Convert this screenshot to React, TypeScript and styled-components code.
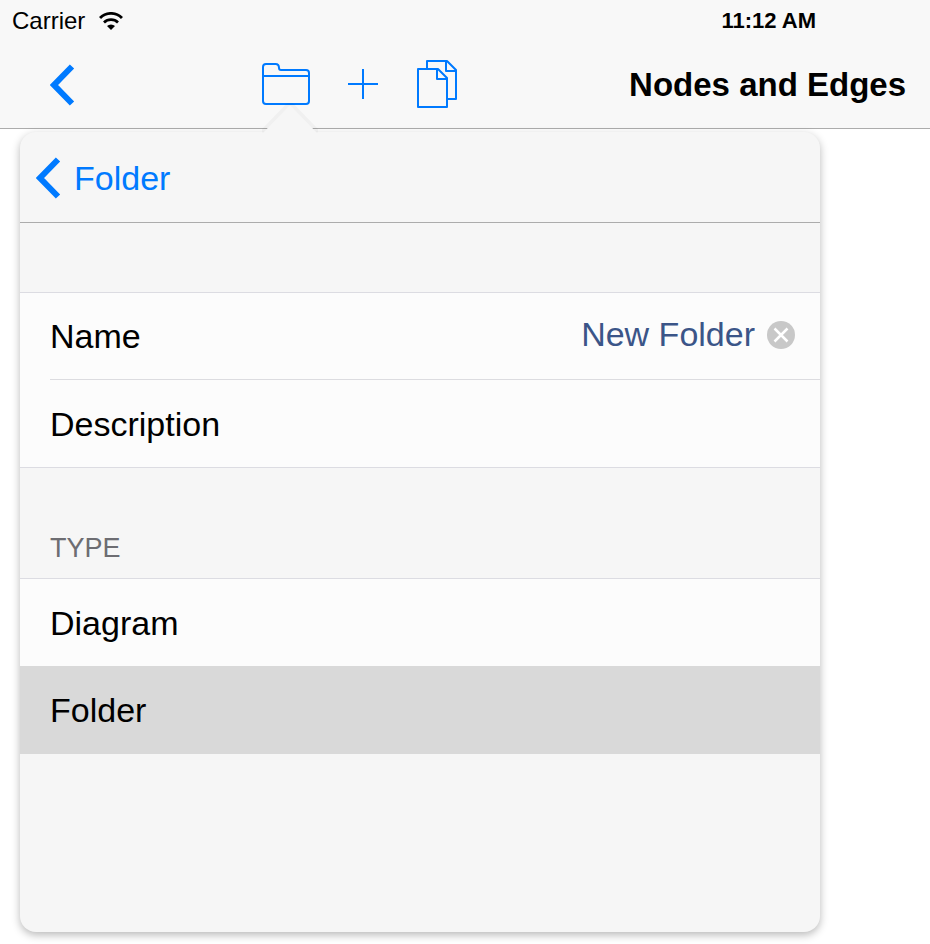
import React, { useState } from "react";
import styled, { createGlobalStyle } from "styled-components";

const GlobalStyle = createGlobalStyle`
  *, *::before, *::after { box-sizing: border-box; }
  body {
    margin: 0;
    background: #ffffff;
    color: #000000;
    font-family: "Liberation Sans", Arial, Helvetica, sans-serif;
  }
  button, input { font: inherit; }
`;

const TopBar = styled.header`
  background: #f8f8f8;
  border-bottom: 1px solid #acacac;
`;

const StatusBar = styled.div`
  display: flex;
  justify-content: space-between;
  align-items: center;
  height: 42px;
  padding: 0 114px 0 12px;
  font-size: 24px;
  line-height: 28px;
`;

const Carrier = styled.div`
  display: flex;
  align-items: center;
  gap: 14px;
`;

const Clock = styled.time`
  font-size: 22px;
  font-weight: 700;
`;

const Toolbar = styled.nav`
  display: flex;
  align-items: center;
  height: 86px;
  padding: 0 24px 0 50px;
`;

const IconButton = styled.button`
  display: flex;
  flex: none;
  padding: 0;
  border: 0;
  background: none;
  color: #007aff;
  cursor: pointer;
`;

const Tools = styled.div`
  display: flex;
  align-items: center;
  gap: 38px;
  margin-left: 187px;
  padding-bottom: 3px;
`;

const Title = styled.h1`
  flex: 1;
  margin: 0;
  font-size: 33px;
  line-height: 40px;
  font-weight: 700;
  text-align: right;
  white-space: nowrap;
`;

const Popover = styled.section`
  position: relative;
  width: min(800px, calc(100% - 40px));
  min-height: 800px;
  margin: 3px 20px 12px;
  border-radius: 16px;
  background: #f6f6f6;
  box-shadow: 0 3px 8px rgba(0, 0, 0, 0.28);
`;

const PopoverArrow = styled.svg`
  position: absolute;
  top: -29px;
  left: 242px;
`;

const PopoverHeader = styled.div`
  display: flex;
  align-items: center;
  height: 91px;
  padding: 2px 16px 0;
  border-bottom: 1px solid #acacac;
`;

const BackButton = styled(IconButton)`
  align-items: center;
  gap: 13px;
  font-size: 34px;
  line-height: 40px;
`;

const Group = styled.fieldset`
  min-width: 0;
  margin: 0;
  padding: 0;
  border: 0;
`;

const Fields = styled.div`
  margin-top: 69px;
  border-top: 1px solid #dcdce2;
  border-bottom: 1px solid #dcdce2;
  background: #fcfcfc;
`;

const FieldRow = styled.div<{ $divided?: boolean }>`
  display: flex;
  align-items: center;
  height: 87px;
  margin-left: 30px;
  padding-right: 25px;
  border-bottom: ${(p) => (p.$divided ? "1px solid #dcdce0" : "0")};
  font-size: 34px;
  line-height: 40px;
`;

const TextInput = styled.input`
  flex: 1;
  min-width: 0;
  height: 44px;
  margin: 0 12px 4px 24px;
  padding: 0;
  border: 0;
  outline: 0;
  background: transparent;
  color: #3b5588;
  text-align: right;
`;

const ClearButton = styled(IconButton)`
  margin-bottom: 2px;
`;

const GroupTitle = styled.legend`
  display: flex;
  align-items: flex-end;
  width: 100%;
  height: 110px;
  padding: 0 30px 14px;
  color: #6d6d72;
  font-size: 27px;
  line-height: 32px;
`;

const Options = styled.div`
  border-top: 1px solid #dcdce2;
`;

const Option = styled.label<{ $selected: boolean }>`
  display: flex;
  align-items: center;
  height: ${(p) => (p.$selected ? "88px" : "87px")};
  padding: 0 30px;
  background: ${(p) => (p.$selected ? "#d9d9d9" : "#fcfcfc")};
  font-size: 34px;
  line-height: 40px;
  cursor: pointer;
`;

const Radio = styled.input`
  appearance: none;
  width: 0;
  height: 0;
  margin: 0;
  outline: 0;
`;

const Chevron = () => (
  <svg width="25" height="42" viewBox="0 0 25 42" fill="none" aria-hidden="true">
    <path d="M22 2.5 4 21l18 18.500" stroke="currentColor" strokeWidth="6" />
  </svg>
);

const WifiIcon = () => (
  <svg width="24" height="18" viewBox="0 0 24 18" fill="none" aria-hidden="true">
    <path d="M1 6a15.500 15.500 0 0 1 22 0" stroke="#000" strokeWidth="2.900" />
    <path d="M5 10.500a10 10 0 0 1 14 0" stroke="#000" strokeWidth="2.700" />
    <path d="M12 18 8 14a5.800 5.800 0 0 1 8 0Z" fill="#000" />
  </svg>
);

const FolderIcon = () => (
  <svg width="48" height="42" viewBox="0 0 48 42" fill="none" stroke="currentColor" strokeWidth="2" aria-hidden="true">
    <path d="M1 13V4q0-3 3-3h9.500Q17 1 17 5q0 2 2 2h25q3 0 3 3v28q0 3-3 3H4q-3 0-3-3V13h46" />
  </svg>
);

const PlusIcon = () => (
  <svg width="30" height="30" viewBox="0 0 30 30" stroke="currentColor" strokeWidth="2" aria-hidden="true">
    <path d="M15 0v30M0 15h30" />
  </svg>
);

const PagesIcon = () => (
  <svg width="42" height="48" viewBox="-1 0 42 48" fill="none" stroke="currentColor" strokeWidth="2" strokeLinejoin="round" aria-hidden="true">
    <path d="M10 9V1h20l9 9v29h-8M29 1v10h10" />
    <path d="M1 9h20l9 9v29H1ZM20 9v10h10" />
  </svg>
);

const ClearIcon = () => (
  <svg width="28" height="28" viewBox="0 0 28 28" aria-hidden="true">
    <circle cx="14" cy="14" r="14" fill="#c8c8c8" />
    <path d="m7.500 7.500 13 13m0-13-13 13" stroke="#fff" strokeWidth="2.500" />
  </svg>
);

const types = ["Diagram", "Folder"];

export default function App() {
  const [name, setName] = useState("New Folder");
  const [description, setDescription] = useState("");
  const [type, setType] = useState("Folder");

  return (
    <>
      <GlobalStyle />
      <TopBar>
        <StatusBar>
          <Carrier>
            Carrier
            <WifiIcon />
          </Carrier>
          <Clock>11:12 AM</Clock>
        </StatusBar>
        <Toolbar>
          <IconButton type="button" aria-label="Back">
            <Chevron />
          </IconButton>
          <Tools>
            <IconButton type="button" aria-label="Folder">
              <FolderIcon />
            </IconButton>
            <IconButton type="button" aria-label="Add">
              <PlusIcon />
            </IconButton>
            <IconButton type="button" aria-label="Pages">
              <PagesIcon />
            </IconButton>
          </Tools>
          <Title>Nodes and Edges</Title>
        </Toolbar>
      </TopBar>
      <main>
        <Popover aria-label="New folder">
          <PopoverArrow width="56" height="32" viewBox="0 0 56 32" aria-hidden="true">
            <path d="M0 29 25 3q3-3 6 0l25 26" fill="none" stroke="#000" strokeOpacity="0.03" strokeWidth="4" />
            <path d="M0 31 26 4q2-2 4 0l26 27Z" fill="#f6f6f6" />
          </PopoverArrow>
          <PopoverHeader>
            <BackButton type="button">
              <Chevron />
              Folder
            </BackButton>
          </PopoverHeader>
          <Fields>
            <FieldRow $divided>
              <label htmlFor="name">Name</label>
              <TextInput id="name" value={name} onChange={(e) => setName(e.target.value)} />
              <ClearButton type="button" aria-label="Clear name" onClick={() => setName("")}>
                <ClearIcon />
              </ClearButton>
            </FieldRow>
            <FieldRow>
              <label htmlFor="description">Description</label>
              <TextInput id="description" value={description} onChange={(e) => setDescription(e.target.value)} />
            </FieldRow>
          </Fields>
          <Group>
            <GroupTitle>TYPE</GroupTitle>
            <Options>
              {types.map((t) => (
                <Option key={t} $selected={t === type}>
                  <Radio type="radio" name="type" checked={t === type} onChange={() => setType(t)} />
                  {t}
                </Option>
              ))}
            </Options>
          </Group>
        </Popover>
      </main>
    </>
  );
}
